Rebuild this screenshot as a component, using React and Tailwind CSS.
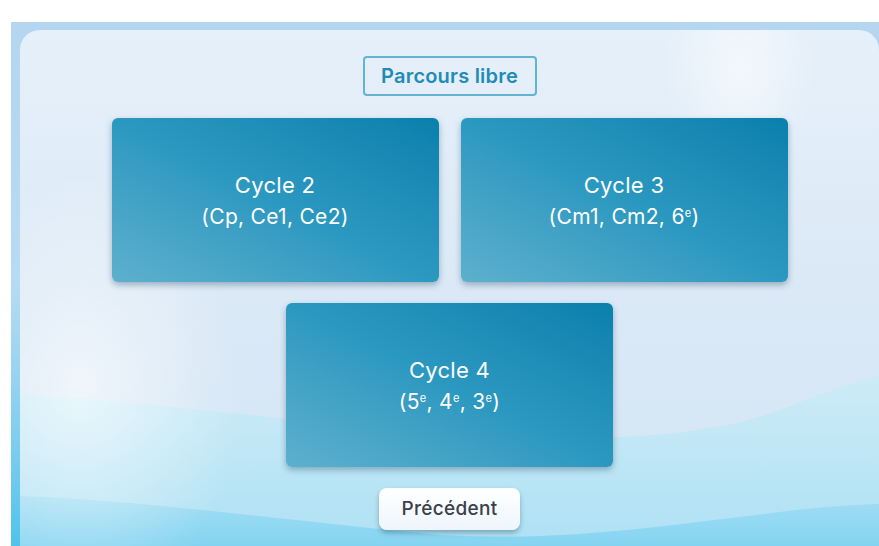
const sup = "relative -top-[7px] text-[11px] leading-none";

const cycles = [
  { title: "Cycle 2", levels: <>(Cp, Ce1, Ce2)</> },
  {
    title: "Cycle 3",
    levels: (
      <>
        (Cm1, Cm2, 6<span className={sup}>e</span>)
      </>
    ),
  },
  {
    title: "Cycle 4",
    levels: (
      <>
        (5<span className={sup}>e</span>, 4<span className={sup}>e</span>, 3
        <span className={sup}>e</span>)
      </>
    ),
  },
];

function CycleCard({ cycle }) {
  return (
    <button className="flex h-[164px] w-[327px] flex-col items-center justify-center rounded-[6px] bg-linear-to-tr from-[#5cb0cd] via-[#2b98c0] to-[#0880ad] pt-[2px] text-white shadow-[0_3px_6px_rgba(20,60,90,0.35)]">
      <span className="h-[32px] text-[22px] leading-[32px] tracking-[0.3px]">{cycle.title}</span>
      <span className="h-[32px] text-[21px] leading-[32px] tracking-[0.3px]">{cycle.levels}</span>
    </button>
  );
}

function Waves() {
  return (
    <svg
      className="pointer-events-none absolute inset-0 h-full w-full"
      viewBox="0 0 859 516"
      preserveAspectRatio="none"
    >
      <defs>
        <radialGradient
          id="glowLeft"
          cx="60"
          cy="360"
          r="200"
          gradientUnits="userSpaceOnUse"
          gradientTransform="translate(60 360) scale(0.8 1.1) translate(-60 -360)"
        >
          <stop offset="0" stopColor="#ffffff" stopOpacity="0.6" />
          <stop offset="1" stopColor="#ffffff" stopOpacity="0" />
        </radialGradient>
        <radialGradient
          id="glowTop"
          cx="720"
          cy="40"
          r="110"
          gradientUnits="userSpaceOnUse"
          gradientTransform="translate(720 40) scale(0.7 1) translate(-720 -40)"
        >
          <stop offset="0" stopColor="#ffffff" stopOpacity="0.55" />
          <stop offset="1" stopColor="#ffffff" stopOpacity="0" />
        </radialGradient>
        <linearGradient id="wave1" x1="0" y1="0" x2="0" y2="1">
          <stop offset="0" stopColor="#cdebf7" />
          <stop offset="1" stopColor="#aee1f4" />
        </linearGradient>
        <linearGradient id="wave2" x1="0" y1="0" x2="0" y2="1">
          <stop offset="0" stopColor="#a3ddf3" />
          <stop offset="1" stopColor="#84d4f1" />
        </linearGradient>
      </defs>
      <rect x="0" y="0" width="859" height="516" fill="url(#glowTop)" />
      <path
        d="M0 364 C 150 372, 300 398, 480 406 C 620 412, 700 402, 760 380 C 800 365, 830 352, 859 346 L 859 516 L 0 516 Z"
        fill="url(#wave1)"
      />
      <path
        d="M0 466 C 120 470, 260 490, 420 505 C 540 512, 640 496, 760 482 C 800 477, 830 475, 859 474 L 859 516 L 0 516 Z"
        fill="url(#wave2)"
      />
      <rect x="0" y="0" width="859" height="516" fill="url(#glowLeft)" />
    </svg>
  );
}

export default function App() {
  return (
    <div
      className="h-[546px] w-[879px] overflow-hidden bg-white pl-[11px] pt-[22px]"
      style={{ fontFamily: "Inter, 'Noto Sans', sans-serif" }}
    >
      <div className="h-full w-full bg-linear-to-b from-[#b4d6f0] via-[#b6dbf2] to-[#4fc3ec] pl-[9px] pt-[8px]">
        <div className="relative h-full w-full overflow-hidden rounded-t-[20px] bg-linear-to-b from-[#e6f0fa] via-[#dbe9f6] to-[#d2e5f5]">
          <Waves />
          <div className="relative flex flex-col items-center pt-[26px]">
            <div className="flex h-[40px] w-[174px] items-center justify-center rounded-[4px] border-2 border-[#62b4d2] text-[20px] font-semibold tracking-[0.2px] text-[#1f8bb6]">
              Parcours libre
            </div>
            <div className="mt-[22px] flex gap-[22px]">
              <CycleCard cycle={cycles[0]} />
              <CycleCard cycle={cycles[1]} />
            </div>
            <div className="mt-[21px]">
              <CycleCard cycle={cycles[2]} />
            </div>
            <button className="mt-[21px] flex h-[42px] w-[141px] items-center justify-center rounded-[8px] bg-linear-to-b from-white to-[#eef6fb] text-[19px] font-medium tracking-[0.3px] text-[#3b404b] shadow-[0_3px_5px_rgba(20,60,90,0.35)]">
              Précédent
            </button>
          </div>
        </div>
      </div>
    </div>
  );
}
